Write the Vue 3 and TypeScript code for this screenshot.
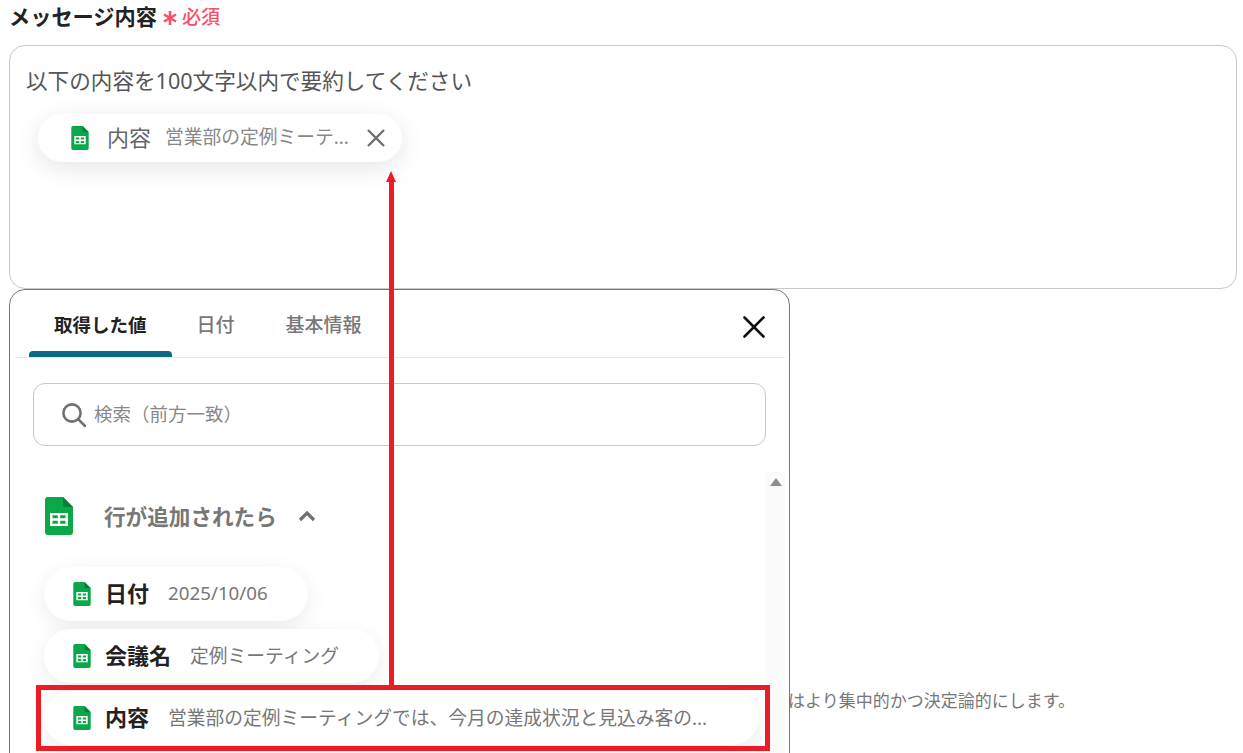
<template>
  <main class="page">
    <div class="label-row">
      <span class="label">メッセージ内容</span>
      <svg class="asterisk" viewBox="0 0 16 16">
        <path d="M8 1V15M2 4.5 14 11.5M14 4.5 2 11.5" />
      </svg>
      <span class="required">必須</span>
    </div>

    <section class="editor">
      <p class="prompt">以下の内容を100文字以内で要約してください</p>
      <div class="inserted-chip">
        <svg class="sheet-sm" viewBox="0 0 28 38"><use href="#sheet-icon" /></svg>
        <span class="inserted-name">内容</span>
        <span class="inserted-value">営業部の定例ミーテ...</span>
        <svg class="chip-close" viewBox="0 0 20 20">
          <path d="M2 2 18 18M18 2 2 18" />
        </svg>
      </div>
    </section>

    <div class="lower">
      <section class="picker">
        <header class="tabs">
          <button v-for="(tab, index) in tabs" :key="tab" class="tab" :class="{ active: index === 0 }">
            {{ tab }}
          </button>
          <svg class="picker-close" viewBox="0 0 22 22">
            <path d="M1.5 1.5 20.5 20.5M20.5 1.5 1.5 20.5" />
          </svg>
        </header>

        <div class="search">
          <svg class="search-icon" viewBox="0 0 24 24">
            <circle cx="10" cy="10" r="8.6" />
            <path d="M16.4 16.4 23 23" />
          </svg>
          <span class="search-text">検索（前方一致）</span>
        </div>

        <div class="list-wrap">
          <div class="scroll-track"><i></i></div>
          <div class="group-head">
            <svg class="sheet-lg" viewBox="0 0 28 38"><use href="#sheet-icon" /></svg>
            <span class="group-title">行が追加されたら</span>
            <svg class="chevron" viewBox="0 0 18 12"><path d="M2 10 9 3 16 10" /></svg>
          </div>
          <div class="chips">
            <div v-for="item in items" :key="item.name" class="chip">
              <svg class="sheet-sm" viewBox="0 0 28 38"><use href="#sheet-icon" /></svg>
              <span class="chip-name">{{ item.name }}</span>
              <span class="chip-value">{{ item.value }}</span>
            </div>
          </div>
        </div>
      </section>
      <p class="note">はより集中的かつ決定論的にします。</p>
    </div>

    <!-- 赤い注釈 -->
    <div class="arrow-line"></div>
    <div class="arrow-head"></div>
    <div class="highlight"></div>

    <svg class="defs" width="0" height="0">
      <symbol id="sheet-icon" viewBox="0 0 28 38">
        <path d="M3 0H18L28 10V35a3 3 0 0 1-3 3H3a3 3 0 0 1-3-3V3a3 3 0 0 1 3-3Z" fill="#0ba84a" />
        <path d="M18 0 28 10H20a2 2 0 0 1-2-2Z" fill="#0a7d3b" />
        <path
          fill-rule="evenodd"
          d="M5 16H23V29H5ZM7.5 18.2V21.3H12.8V18.2ZM15.2 18.2V21.3H20.5V18.2ZM7.5 23.7V26.8H12.8V23.7ZM15.2 23.7V26.8H20.5V23.7Z"
          fill="#fff"
        />
      </symbol>
    </svg>
  </main>
</template>

<script setup lang="ts">
const tabs = ['取得した値', '日付', '基本情報']

const items = [
  { name: '日付', value: '2025/10/06' },
  { name: '会議名', value: '定例ミーティング' },
  { name: '内容', value: '営業部の定例ミーティングでは、今月の達成状況と見込み客の...' }
]
</script>

<style>
html,
body {
  margin: 0;
  background: #fff;
}
</style>

<style scoped>
.page {
  position: relative;
  width: 1243px;
  height: 753px;
  overflow: hidden;
  box-sizing: border-box;
  padding: 0 6px 0 9px;
  background: #fff;
  font-family: 'Noto Sans', 'Noto Sans CJK JP', sans-serif;
  color: #222;
}
.defs {
  position: absolute;
}
.label-row {
  display: flex;
  align-items: center;
  height: 30px;
  margin-bottom: 15px;
  box-sizing: border-box;
}
.label {
  font-size: 21.2px;
  font-weight: 700;
  color: #222;
}
.asterisk {
  width: 16px;
  height: 16px;
  margin: 6px 0 0 5px;
  fill: none;
  stroke: #f9506a;
  stroke-width: 2.6;
}
.required {
  margin: 2px 0 0 4px;
  font-size: 19px;
  font-weight: 500;
  color: #f9506a;
}
.editor {
  box-sizing: border-box;
  height: 244px;
  padding: 20px 16px;
  border: 1px solid #c8c8c8;
  border-radius: 16px;
}
.prompt {
  margin: 0 0 18px;
  font-size: 21.6px;
  line-height: 30px;
  color: #555;
}
.inserted-chip {
  display: inline-flex;
  align-items: center;
  height: 48px;
  margin-left: 12px;
  padding: 0 16px 0 33px;
  border-radius: 24px;
  background: #fff;
  box-shadow: 0 6px 26px rgba(0, 0, 0, 0.1);
}
.sheet-sm {
  flex: none;
  width: 18px;
  height: 24px;
}
.inserted-name {
  margin: 0 0 5px 18px;
  font-size: 22px;
  color: #666;
}
.inserted-value {
  margin: 0 0 5px 14px;
  font-size: 18.75px;
  color: #888;
}
.chip-close {
  width: 20px;
  height: 20px;
  margin-left: 17px;
  fill: none;
  stroke: #707070;
  stroke-width: 2.4;
}
.lower {
  display: flex;
}
.picker {
  position: relative;
  z-index: 1;
  flex: none;
  box-sizing: border-box;
  width: 781px;
  height: 500px;
  padding: 0 4px 0 5px;
  border: 1px solid #777;
  border-radius: 16px;
  background: #fff;
}
.tabs {
  position: relative;
  display: flex;
  height: 67px;
  padding-left: 14px;
  border-bottom: 1px solid #e6e6e6;
}
.tab {
  padding: 0 24px;
  border: 0;
  background: none;
  font: 500 19px 'Noto Sans', 'Noto Sans CJK JP', sans-serif;
  color: #777;
}
.tab:nth-child(2) {
  margin-left: 1px;
}
.tab:nth-child(3) {
  margin-left: 3px;
}
.tab.active {
  padding: 0 25px;
  font-weight: 700;
  font-size: 18.5px;
  color: #222;
  position: relative;
}
.tab.active::after {
  content: '';
  position: absolute;
  left: 0;
  right: 0;
  bottom: 0;
  height: 6px;
  border-radius: 4px 4px 0 0;
  background: #0b6a85;
}
.picker-close {
  position: absolute;
  right: 20px;
  top: 26px;
  width: 22px;
  height: 22px;
  fill: none;
  stroke: #111;
  stroke-width: 2.6;
  stroke-linecap: round;
}
.search {
  display: flex;
  align-items: center;
  box-sizing: border-box;
  height: 63px;
  margin: 25px 19px 0 18px;
  padding-left: 28px;
  border: 1px solid #c8c8c8;
  border-radius: 12px;
  font-size: 18.5px;
  color: #888;
}
.search-text {
  margin-bottom: 3px;
}
.search-icon {
  width: 24px;
  height: 24px;
  margin-right: 8px;
  fill: none;
  stroke: #707070;
  stroke-width: 2.6;
  stroke-linecap: round;
}
.list-wrap {
  position: relative;
  margin-top: 26px;
  padding: 25px 0 0 29px;
}
.scroll-track {
  position: absolute;
  top: 0;
  right: 0;
  bottom: -60px;
  width: 19px;
  background: #fafafa;
}
.scroll-track i {
  display: block;
  width: 0;
  margin: 6px auto 0;
  border: 6.5px solid transparent;
  border-top: 0;
  border-bottom: 8px solid #8e8e8e;
}
.group-head {
  display: flex;
  align-items: center;
  height: 38px;
}
.sheet-lg {
  flex: none;
  width: 28px;
  height: 38px;
  margin-left: 1px;
}
.group-title {
  margin: 0 0 2px 31px;
  font-size: 21.6px;
  font-weight: 700;
  color: #777;
}
.chevron {
  width: 18px;
  height: 12px;
  margin-left: 21px;
  fill: none;
  stroke: #707070;
  stroke-width: 3.2;
}
.chips {
  display: flex;
  flex-direction: column;
  align-items: flex-start;
  gap: 8px;
  margin-top: 32px;
}
.chip {
  display: flex;
  align-items: center;
  height: 54px;
  padding: 0 40px 0 29px;
  border-radius: 27px;
  background: #fff;
  box-shadow: 0 6px 22px rgba(0, 0, 0, 0.08);
}
.chip:last-child {
  padding-right: 52px;
}
.chip-name {
  margin: 0 0 5px 14px;
  font-size: 22px;
  font-weight: 700;
  color: #222;
}
.chip-value {
  margin: 0 0 3px 19px;
  font-size: 18.75px;
  color: #777;
}
.note {
  margin: 400px 0 0 -2px;
  font-size: 17px;
  line-height: 24px;
  white-space: nowrap;
  color: #777;
}
.arrow-line {
  position: absolute;
  z-index: 2;
  left: 389px;
  top: 178px;
  width: 5px;
  height: 508px;
  background: #ed1c24;
}
.arrow-head {
  position: absolute;
  z-index: 2;
  left: 386px;
  top: 171px;
  width: 0;
  border: 5.5px solid transparent;
  border-top: 0;
  border-bottom: 11px solid #ed1c24;
}
.highlight {
  position: absolute;
  z-index: 2;
  left: 36px;
  top: 685px;
  width: 734px;
  height: 66px;
  box-sizing: border-box;
  border: 5px solid #ed1c24;
}
</style>
